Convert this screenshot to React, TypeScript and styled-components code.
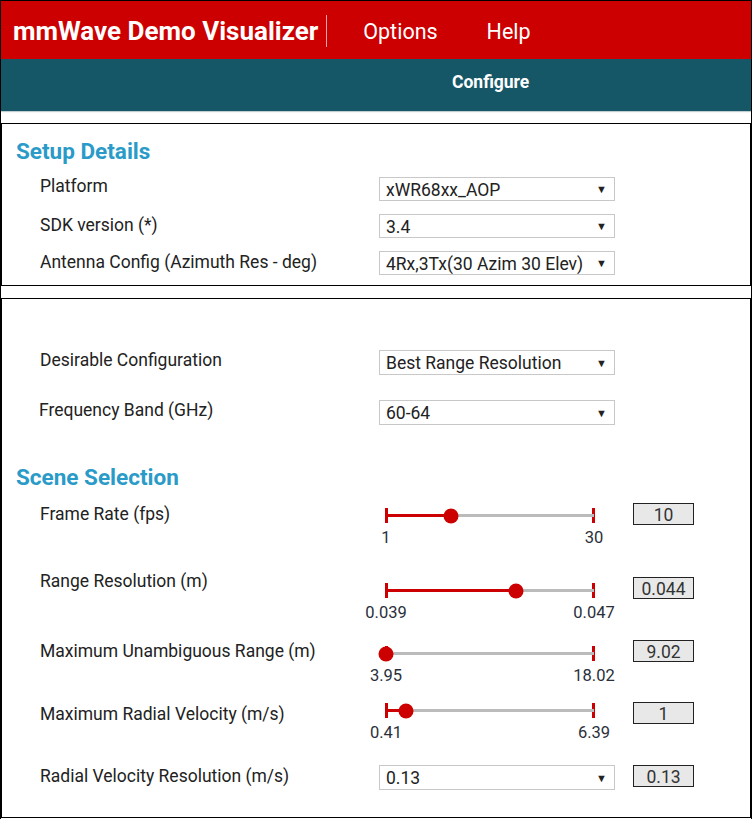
import React from "react";
import styled, { createGlobalStyle } from "styled-components";

const Global = createGlobalStyle`
  html, body { margin: 0; padding: 0; background: #fff; }
  body { font-family: Roboto, "Liberation Sans", Arial, sans-serif; color: #222; }
  * { box-sizing: border-box; }
`;

const Root = styled.div`
  width: 752px;
  height: 819px;
  border: 1px solid #000;
  border-bottom: none;
  overflow: hidden;
`;

const TopBar = styled.header`
  height: 58px;
  background: #cc0000;
  display: flex;
  align-items: center;
  padding-left: 12px;
  padding-top: 2px;
  color: #fff;
`;

const Brand = styled.div`
  font-size: 26px;
  font-weight: 700;
  padding-right: 8px;
`;

const Divider = styled.div`
  width: 1px;
  height: 32px;
  background: rgba(255, 255, 255, 0.65);
  margin-right: 36px;
`;

const MenuItem = styled.div`
  font-size: 21.5px;
  margin-right: 49px;
`;

const TabBar = styled.nav`
  height: 52px;
  background: #155767;
  display: flex;
  align-items: center;
  padding-left: 451px;
  box-shadow: 0 1px 1px rgba(80, 110, 130, 0.35);
`;

const Tab = styled.div`
  color: #fff;
  font-size: 17.5px;
  font-weight: 700;
  padding-bottom: 7px;
`;

const Panel = styled.section<{ $mt: number; $pt: number; $pb: number; $h: number }>`
  margin-top: ${(p) => p.$mt}px;
  height: ${(p) => p.$h}px;
  border: 1px solid #000;
  border-right-width: 2px;
  margin-right: -1px;
  padding: ${(p) => p.$pt}px 0 ${(p) => p.$pb}px 14px;
`;

const Heading = styled.h2<{ $mt?: number }>`
  margin: ${(p) => p.$mt ?? 0}px 0 0 0;
  font-size: 22.5px;
  line-height: 26px;
  font-weight: 700;
  color: #2a9bc8;
`;

const Rows = styled.div<{ $gap: number; $mt: number }>`
  display: flex;
  flex-direction: column;
  gap: ${(p) => p.$gap}px;
  margin-top: ${(p) => p.$mt}px;
`;

const Row = styled.div<{ $h?: number }>`
  display: grid;
  grid-template-columns: 321px 236px 61px;
  column-gap: 18px;
  padding-left: 24px;
  align-items: start;
  ${(p) => (p.$h ? `height: ${p.$h}px;` : "")}
`;

const Label = styled.div<{ $lh: number; $dx?: number; $dy?: number }>`
  font-size: 17.5px;
  line-height: ${(p) => p.$lh}px;
  color: #222;
  white-space: nowrap;
  margin-left: ${(p) => p.$dx ?? 0}px;
  margin-top: ${(p) => p.$dy ?? 0}px;
`;

const Select = styled.div<{ $h: number }>`
  height: ${(p) => p.$h}px;
  border: 1px solid #c8c8c8;
  background: #fff;
  display: flex;
  align-items: center;
  justify-content: space-between;
  padding: 1px 7px 0 6px;
  font-size: 17.5px;
  color: #222;
`;

const Arrow = styled.span`
  font-size: 11px;
  color: #222;
`;

const ValueBox = styled.div`
  width: 61px;
  height: 22px;
  border: 1px solid #222;
  background: #e8e8e8;
  display: flex;
  align-items: center;
  justify-content: center;
  padding-top: 1px;
  font-size: 17.5px;
  color: #333;
`;

const SliderWrap = styled.div<{ $top: number }>`
  position: relative;
  height: 50px;
  margin-left: 7px;
  width: 208px;
  padding-top: ${(p) => p.$top}px;
`;

const Track = styled.div`
  position: relative;
  height: 3px;
  margin-top: -1px;
`;

const TrackLine = styled.div`
  position: absolute;
  inset: 0;
  background: #bbbbbb;
`;

const Fill = styled.div`
  position: absolute;
  left: 0;
  top: 0;
  height: 3px;
  background: #cc0000;
`;

const Tick = styled.div<{ $side: "left" | "right" }>`
  position: absolute;
  top: -6px;
  ${(p) => (p.$side === "left" ? "left: -1px;" : "right: -1px;")}
  width: 3px;
  height: 15px;
  background: #cc0000;
`;

const Thumb = styled.div`
  position: absolute;
  top: 50%;
  width: 15px;
  height: 15px;
  border-radius: 50%;
  background: #cc0000;
  transform: translate(-50%, -50%);
`;

const TickLabels = styled.div`
  position: relative;
  height: 18px;
  margin-top: 12px;
  font-size: 16.5px;
  line-height: 18px;
  color: #2a2f3a;
`;

const TickLabel = styled.span<{ $side: "left" | "right" }>`
  position: absolute;
  top: 0;
  ${(p) => (p.$side === "left" ? "left: 0;" : "left: 100%;")}
  transform: translateX(-50%);
  white-space: nowrap;
`;

type SliderProps = { min: string; max: string; frac: number; top: number };

function Slider({ min, max, frac, top }: SliderProps) {
  const pct = `${frac * 100}%`;
  return (
    <SliderWrap $top={top}>
      <Track>
        <Tick $side="left" />
        <Tick $side="right" />
        <TrackLine />
        <Fill style={{ width: pct }} />
        <Thumb style={{ left: pct }} />
      </Track>
      <TickLabels>
        <TickLabel $side="left">{min}</TickLabel>
        <TickLabel $side="right">{max}</TickLabel>
      </TickLabels>
    </SliderWrap>
  );
}

const setup = [
  { label: "Platform", value: "xWR68xx_AOP", dy: 0 },
  { label: "SDK version (*)", value: "3.4", dy: 2 },
  { label: "Antenna Config (Azimuth Res - deg)", value: "4Rx,3Tx(30 Azim 30 Elev)", dy: 2 },
];

const sliders = [
  { label: "Frame Rate (fps)", min: "1", max: "30", frac: 64.5 / 208, value: "10", h: 74, top: 12, dy: 1 },
  { label: "Range Resolution (m)", min: "0.039", max: "0.047", frac: 130 / 208, value: "0.044", h: 63, top: 13, dy: -6 },
  { label: "Maximum Unambiguous Range (m)", min: "3.95", max: "18.02", frac: 0, value: "9.02", h: 62, top: 13, dy: 1 },
  { label: "Maximum Radial Velocity (m/s)", min: "0.41", max: "6.39", frac: 19.5 / 208, value: "1", h: 63, top: 8, dy: 2 },
];

export default function App() {
  return (
    <>
      <Global />
      <Root>
        <TopBar>
          <Brand>mmWave Demo Visualizer</Brand>
          <Divider />
          <MenuItem>Options</MenuItem>
          <MenuItem>Help</MenuItem>
        </TopBar>
        <TabBar>
          <Tab>Configure</Tab>
        </TabBar>

        <Panel $mt={12} $pt={14} $pb={10} $h={163}>
          <Heading>Setup Details</Heading>
          <Rows $gap={13} $mt={13}>
            {setup.map((r) => (
              <Row key={r.label}>
                <Label $lh={18} $dy={r.dy}>{r.label}</Label>
                <Select $h={24}>
                  <span>{r.value}</span>
                  <Arrow>▼</Arrow>
                </Select>
              </Row>
            ))}
          </Rows>
        </Panel>

        <Panel $mt={12} $pt={51} $pb={0} $h={520}>
          <Rows $gap={25} $mt={0}>
            <Row>
              <Label $lh={20}>Desirable Configuration</Label>
              <Select $h={25}>
                <span>Best Range Resolution</span>
                <Arrow>▼</Arrow>
              </Select>
            </Row>
            <Row>
              <Label $lh={20} $dx={-1}>Frequency Band (GHz)</Label>
              <Select $h={25}>
                <span>60-64</span>
                <Arrow>▼</Arrow>
              </Select>
            </Row>
          </Rows>
          <Heading $mt={39}>Scene Selection</Heading>
          <Rows $gap={0} $mt={13}>
            {sliders.map((s) => (
              <Row key={s.label} $h={s.h}>
                <Label $lh={20} $dy={s.dy}>{s.label}</Label>
                <Slider min={s.min} max={s.max} frac={s.frac} top={s.top} />
                <ValueBox>{s.value}</ValueBox>
              </Row>
            ))}
            <Row>
              <Label $lh={20} $dy={1}>Radial Velocity Resolution (m/s)</Label>
              <Select $h={25}>
                <span>0.13</span>
                <Arrow>▼</Arrow>
              </Select>
              <ValueBox>0.13</ValueBox>
            </Row>
          </Rows>
        </Panel>
      </Root>
    </>
  );
}
